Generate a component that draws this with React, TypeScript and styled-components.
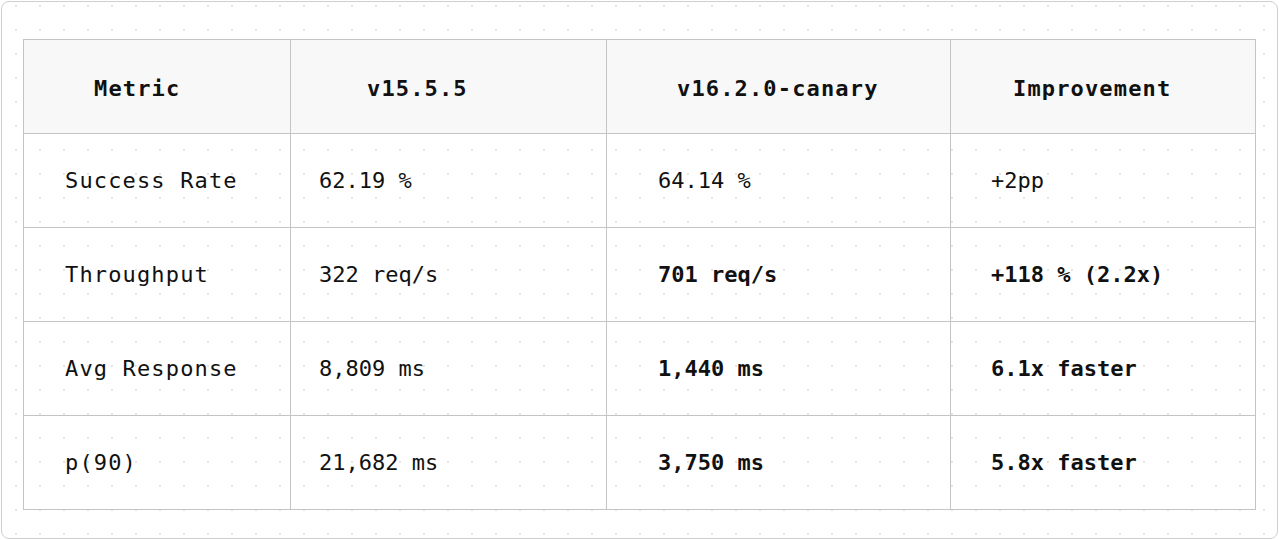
import React from "react";
import styled, { createGlobalStyle } from "styled-components";

const Global = createGlobalStyle`
  html, body { margin: 0; padding: 0; background: #ffffff; }
  body { font-family: "DejaVu Sans Mono", "Liberation Mono", monospace; color: #111; }
`;

const Frame = styled.div`
  box-sizing: border-box;
  width: 1277px;
  height: 538px;
  margin: 1px;
  border: 1px solid #cfcfcf;
  border-radius: 8px;
  padding: 37px 21px 0 21px;
  background-color: #ffffff;
  background-image: radial-gradient(circle, #e4e4e4 1.1px, transparent 1.4px);
  background-size: 24px 24px;
  background-position: 2px -8px;
`;

const Table = styled.table`
  border-collapse: collapse;
  table-layout: fixed;
  width: 1232px;
  font-size: 22px;
`;

const HeadCell = styled.th<{ $pad: number }>`
  height: 94px;
  padding: 3px 0 0 ${(p) => p.$pad}px;
  border: 1px solid #c4c4c4;
  background: #f8f8f8;
  text-align: left;
  font-weight: 700;
  letter-spacing: 1.15px;
  color: #111;
  vertical-align: middle;
  box-sizing: border-box;
`;

const Cell = styled.td<{ $pad: number; $bold?: boolean; $label?: boolean }>`
  height: 94px;
  padding: 0 0 0 ${(p) => p.$pad}px;
  border: 1px solid #c4c4c4;
  text-align: left;
  font-weight: ${(p) => (p.$bold ? 700 : 400)};
  letter-spacing: ${(p) => (p.$label ? "1.15px" : "0px")};
  color: #111;
  vertical-align: middle;
  box-sizing: border-box;
  white-space: nowrap;
`;

const widths = [267, 316, 344, 305];
const headPads = [70, 76, 70, 62];
const bodyPads = [41, 28, 51, 40];

const headers = ["Metric", "v15.5.5", "v16.2.0-canary", "Improvement"];
const rows: { cells: string[]; bold: boolean }[] = [
  { cells: ["Success Rate", "62.19 %", "64.14 %", "+2pp"], bold: false },
  { cells: ["Throughput", "322 req/s", "701 req/s", "+118 % (2.2x)"], bold: true },
  { cells: ["Avg Response", "8,809 ms", "1,440 ms", "6.1x faster"], bold: true },
  { cells: ["p(90)", "21,682 ms", "3,750 ms", "5.8x faster"], bold: true },
];

export default function App() {
  return (
    <>
      <Global />
      <Frame>
        <Table>
          <colgroup>
            {widths.map((w, i) => (
              <col key={i} style={{ width: w }} />
            ))}
          </colgroup>
          <thead>
            <tr>
              {headers.map((h, i) => (
                <HeadCell key={h} $pad={headPads[i]}>
                  {h}
                </HeadCell>
              ))}
            </tr>
          </thead>
          <tbody>
            {rows.map((r) => (
              <tr key={r.cells[0]}>
                {r.cells.map((c, i) => (
                  <Cell key={i} $pad={bodyPads[i]} $label={i === 0} $bold={r.bold && i >= 2}>
                    {c}
                  </Cell>
                ))}
              </tr>
            ))}
          </tbody>
        </Table>
      </Frame>
    </>
  );
}
